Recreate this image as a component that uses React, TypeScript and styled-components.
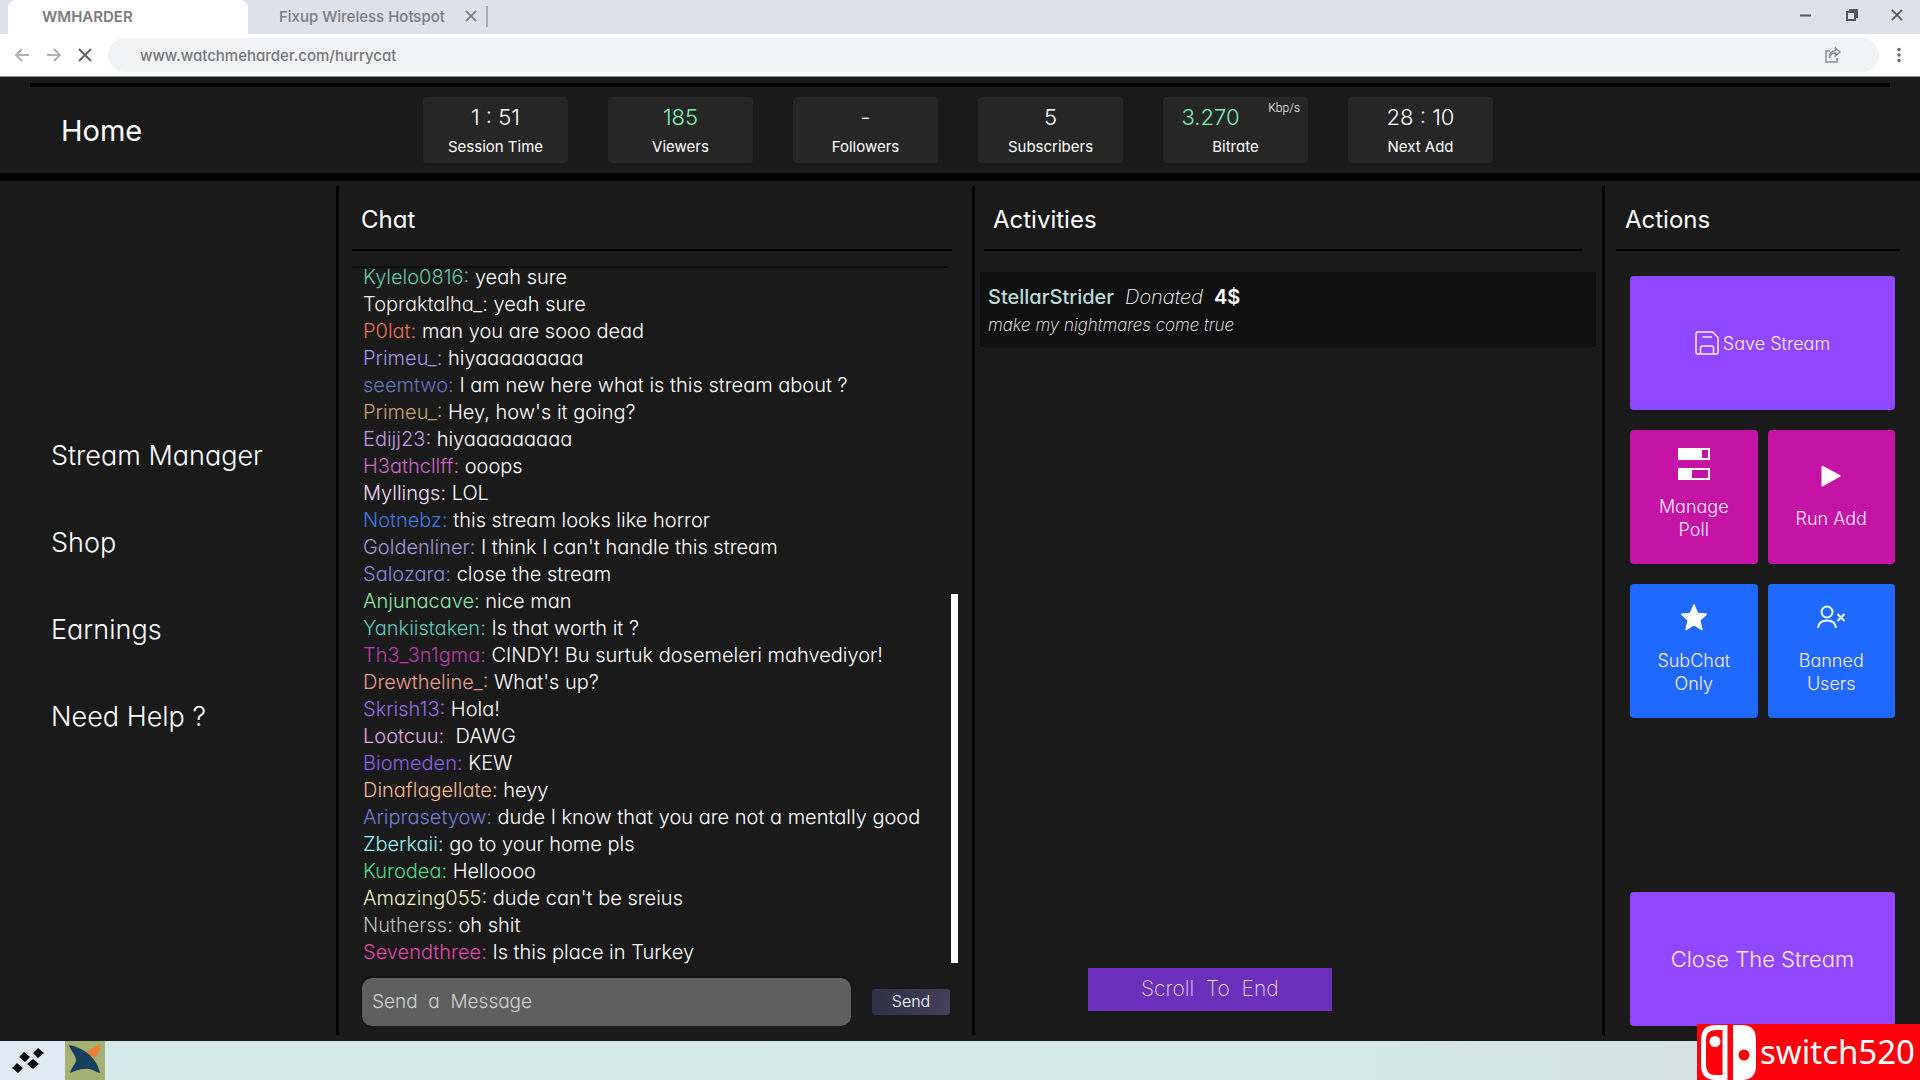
import React from "react";
import styled, { createGlobalStyle } from "styled-components";

const GlobalStyle = createGlobalStyle`
  *, *::before, *::after { box-sizing: border-box; }
  body {
    margin: 0;
    background: #1a1a1a;
    color: #fff;
    font-family: Inter, "Liberation Sans", sans-serif;
    font-weight: 300;
    font-feature-settings: "cv11";
  }
  button, input { font: inherit; font-feature-settings: inherit; color: inherit; border: 0; margin: 0; padding: 0; background: none; }
  a { color: inherit; text-decoration: none; }
  h1, h2, p, ul, dl, dt, dd { margin: 0; padding: 0; font-weight: inherit; }
  ul { list-style: none; }
`;

const Page = styled.div`
  display: flex;
  flex-direction: column;
  height: 100vh;
  min-height: 900px;
  position: relative;
`;

/* Browser chrome */

const TabBar = styled.div`
  display: flex;
  align-items: stretch;
  height: 34px;
  padding-left: 8px;
  background: #dde1ea;
  color: #7c7c80;
  font-size: 15px;
  font-weight: 600;
`;

const ActiveTab = styled.button`
  width: 240px;
  padding: 0 0 2px 34px;
  text-align: left;
  background: #fff;
  border-radius: 8px 8px 0 0;
`;

const Tab = styled.div`
  display: flex;
  align-items: center;
  gap: 18px;
  width: 240px;
  padding: 0 9px 2px 31px;
  border-right: 2px solid #a9acb3;
  border-image: linear-gradient(transparent 20%, #a9acb3 20% 78%, transparent 78%) 1;
`;

const TabName = styled.button`
  flex: 1;
  text-align: left;
  white-space: nowrap;
  font-weight: 500;
`;

const IconButton = styled.button`
  display: flex;
  align-items: center;
  justify-content: center;
`;

const WindowControls = styled.div`
  display: flex;
  align-items: center;
  gap: 31px;
  margin-left: auto;
  padding: 0 17px 5px 0;
  color: #55575c;
`;

const Toolbar = styled.div`
  display: flex;
  align-items: center;
  gap: 16px;
  height: 43px;
  padding: 0 17px 0 14px;
  background: #fff;
  border-bottom: 1px solid #8b9393;
  color: #606266;
`;

const AddressBar = styled.div`
  display: flex;
  align-items: center;
  flex: 1;
  height: 34px;
  padding: 0 38px 0 32px;
  border-radius: 17px;
  background: #f1f3f5;
`;

const Address = styled.input`
  flex: 1;
  min-width: 0;
  font-size: 15px;
  font-weight: 500;
  color: #77777a;
`;

/* Dashboard header */

const Header = styled.header`
  display: flex;
  flex-direction: column;
  height: 104px;
  padding-top: 6px;
  border-bottom: 8px solid #000;
`;

const HeaderRule = styled.div`
  height: 4px;
  margin: 0 30px;
  background: #000;
`;

const HeaderRow = styled.div`
  display: flex;
  align-items: flex-start;
  padding-top: 10px;
`;

const HomeLink = styled.a`
  width: 362px;
  margin-left: 61px;
  padding-top: 16px;
  font-size: 29px;
  line-height: 36px;
  font-weight: 400;
`;

const Stats = styled.dl`
  display: flex;
  gap: 40px;
`;

const Stat = styled.div`
  position: relative;
  display: flex;
  flex-direction: column-reverse;
  justify-content: center;
  gap: 6px;
  width: 145px;
  height: 66px;
  border-radius: 4px;
  background: #262626;
  text-align: center;
`;

const StatLabel = styled.dt`
  font-size: 15px;
  line-height: 20px;
  font-weight: 400;
`;

const StatValue = styled.dd<{ $live?: boolean; $shift?: boolean }>`
  font-size: 22px;
  line-height: 28px;
  color: ${p => (p.$live ? "#7ff0b4" : "#fff")};
  padding-right: ${p => (p.$shift ? "50px" : "0")};
`;

const Unit = styled.span`
  position: absolute;
  top: 3px;
  right: 8px;
  font-family: Roboto, sans-serif;
  font-size: 12px;
  line-height: 16px;
  font-weight: 300;
  color: #fff;
`;

/* Main columns */

const Main = styled.main`
  display: grid;
  grid-template-columns: 339px 636fr 630fr 315px;
  flex: 1;
  min-height: 0;
  padding: 5px 0 6px;
`;

const Column = styled.section`
  display: flex;
  flex-direction: column;
  min-width: 0;
  min-height: 0;
  border-right: 3px solid #000;

  &:last-child { border-right: 0; }
`;

const Sidebar = styled.nav`
  display: flex;
  flex-direction: column;
  gap: 57px;
  padding: 255px 0 0 51px;
  border-right: 3px solid #000;
  font-size: 27px;
  line-height: 30px;
`;

const ColumnTitle = styled.h2<{ $inset: number }>`
  height: 65px;
  margin: 0 20px 0 ${p => p.$inset}px;
  padding: 18px 0 0 9px;
  border-bottom: 2px solid #000;
  font-size: 24px;
  line-height: 32px;
  font-weight: 400;
`;

const ChatBody = styled.div`
  display: flex;
  gap: 3px;
  flex: 1;
  min-height: 0;
  margin: 15px 14px 12px 13px;
`;

const Messages = styled.ul`
  display: flex;
  flex-direction: column;
  justify-content: flex-end;
  flex: 1;
  overflow: hidden;
  padding-left: 11px;
  border-top: 2px solid #0e0e0e;
  font-size: 20px;
  line-height: 27px;
`;

const Message = styled.li`
  flex: none;
  white-space: pre-wrap;
`;

const Author = styled.span<{ $color: string }>`
  color: ${p => p.$color};
`;

const ScrollTrack = styled.div`
  display: flex;
  flex-direction: column;
  justify-content: flex-end;
  width: 7px;
  padding-bottom: 3px;
`;

const ScrollThumb = styled.div`
  height: 53%;
  background: #fff;
`;

const Composer = styled.form`
  display: flex;
  align-items: center;
  gap: 21px;
  margin: 0 22px 9px 23px;
`;

const MessageInput = styled.input`
  flex: 1;
  min-width: 0;
  height: 48px;
  padding: 0 10px 1px;
  border-radius: 10px;
  background: #5f5f5f;
  box-shadow: 0 -1px 0 1px #121212;
  font-size: 19px;

  &::placeholder { color: #d0d0d0; opacity: 1; }
`;

const SendButton = styled.button`
  width: 78px;
  height: 26px;
  padding-bottom: 2px;
  border-radius: 3px;
  background: linear-gradient(100deg, #2c3348, #3a3852 60%, #45405a);
  font-size: 16px;
`;

const Activity = styled.article`
  margin: 21px 6px 0 5px;
  padding: 11px 8px 8px;
  background: #101010;
  font-size: 20px;
  line-height: 28px;
`;

const ActivityLine = styled.p`
  display: flex;
  gap: 11px;
`;

const Donor = styled.strong`
  font-weight: 500;
  color: #b9dcd9;
`;

const Verb = styled.em`
  font-weight: 200;
`;

const Amount = styled.strong`
  font-weight: 600;
`;

const ActivityNote = styled.p`
  font-size: 17px;
  font-style: italic;
  font-weight: 200;
`;

const ScrollToEnd = styled.button`
  width: 244px;
  height: 43px;
  margin: auto 0 24px 18%;
  padding-bottom: 2px;
  background: #6a30bc;
  color: #e6d8f2;
  font-size: 21px;
  font-weight: 200;
  white-space: pre;
`;

const ActionGrid = styled.div`
  display: grid;
  grid-template-columns: 1fr 1fr;
  gap: 20px 10px;
  margin: 25px 25px 0;
`;

const Tile = styled.button<{ $bg: string }>`
  display: flex;
  flex-direction: column;
  align-items: center;
  justify-content: center;
  gap: 15px;
  height: 134px;
  padding: 0 16px 5px;
  border-radius: 4px;
  background: ${p => p.$bg};
  color: #fdeaff;
  font-size: 18px;
  line-height: 23px;
`;

const WideTile = styled(Tile)`
  flex-direction: row;
  gap: 4px;
  grid-column: 1 / -1;
  padding: 0;
`;

const CloseTile = styled(WideTile)`
  margin: auto 25px 9px;
  font-size: 22px;
`;

/* Taskbar */

const Taskbar = styled.footer`
  display: flex;
  height: 39px;
  background: linear-gradient(90deg, #dfeaf3 0, #dfeaf3 64px, #d3e9ea 110px, #d5e9ea 70%, #d3dde1);
`;

const StartButton = styled(IconButton)`
  width: 65px;
  padding: 0 10px 0 0;
`;

const AppButton = styled(IconButton)`
  width: 40px;
  padding-bottom: 4px;
  background: #a5b074;
`;

const Watermark = styled.div`
  position: absolute;
  right: 0;
  bottom: 0;
  display: flex;
  align-items: center;
  gap: 4px;
  height: 56px;
  padding: 0 5px 0 4px;
  background: #ff000c;
  font-family: "Noto Sans", sans-serif;
  font-size: 33px;
  line-height: 56px;
  font-weight: 400;
`;

const messages: [string, string, string][] = [
  ["Kylelo0816", "#62c9a4", "yeah sure"],
  ["Topraktalha_", "#f1eee6", "yeah sure"],
  ["P0lat", "#e8705a", "man you are sooo dead"],
  ["Primeu_", "#a294e6", "hiyaaaaaaaaa"],
  ["seemtwo", "#5f74bb", "I am new here what is this stream about ?"],
  ["Primeu_", "#c8a06c", "Hey, how's it going?"],
  ["Edijj23", "#be9ae2", "hiyaaaaaaaaa"],
  ["H3athcllff", "#c968c2", "ooops"],
  ["Myllings", "#f3dcfa", "LOL"],
  ["Notnebz", "#3a7be2", "this stream looks like horror"],
  ["Goldenliner", "#a298d4", "I think I can't handle this stream"],
  ["Salozara", "#868dd8", "close the stream"],
  ["Anjunacave", "#8ce4a8", "nice man"],
  ["Yankiistaken", "#5ec8be", "Is that worth it ?"],
  ["Th3_3n1gma", "#b83cab", "CINDY! Bu surtuk dosemeleri mahvediyor!"],
  ["Drewtheline_", "#e89c90", "What's up?"],
  ["Skrish13", "#9370e8", "Hola!"],
  ["Lootcuu", "#e0aee4", " DAWG"],
  ["Biomeden", "#8860e4", "KEW"],
  ["Dinaflagellate", "#f2b891", "heyy"],
  ["Ariprasetyow", "#6f7ed6", "dude I know that you are not a mentally good"],
  ["Zberkaii", "#96eef7", "go to your home pls"],
  ["Kurodea", "#48db7e", "Helloooo"],
  ["Amazing055", "#ecedc0", "dude can't be sreius"],
  ["Nutherss", "#bcbcbc", "oh shit"],
  ["Sevendthree", "#e046aa", "Is this place in Turkey"],
];

const stats: { label: string; value: string; live?: boolean; unit?: string }[] = [
  { label: "Session Time", value: "1 : 51" },
  { label: "Viewers", value: "185", live: true },
  { label: "Followers", value: "-" },
  { label: "Subscribers", value: "5" },
  { label: "Bitrate", value: "3.270", live: true, unit: "Kbp/s" },
  { label: "Next Add", value: "28 : 10" },
];

const Cross = ({ size = 14, width = 2 }: { size?: number; width?: number }) => (
  <svg width={size} height={size} viewBox="0 0 14 14" fill="none" stroke="currentColor" strokeWidth={width}>
    <path d="M1 1l12 12M13 1L1 13" />
  </svg>
);

const Arrow = ({ flip }: { flip?: boolean }) => (
  <svg width="16" height="16" viewBox="0 0 16 16" fill="none" stroke="#b0b2b5" strokeWidth="2">
    <path d={flip ? "M1 8h13M8 2l6 6-6 6" : "M15 8H2M8 2L2 8l6 6"} />
  </svg>
);

const SaveIcon = () => (
  <svg width="24" height="24" viewBox="0 0 24 24" fill="none" stroke="currentColor" strokeWidth="1.5" strokeLinejoin="round">
    <path d="M1 2.500Q1 1 2.500 1H17.500L23 6.500V21.500Q23 23 21.500 23H2.500Q1 23 1 21.500Z" />
    <path d="M5.500 23V17Q5.500 15 7.500 15H16.500Q18.500 15 18.500 17V23M7.500 6H17" />
  </svg>
);

const PollIcon = () => (
  <svg width="32" height="32" viewBox="0 0 32 32" fill="none" stroke="#fff" strokeWidth="2">
    <path d="M1 1h30v10H1zM1 21h30v10H1z" />
    <path d="M1 1h22v10H1zM1 21h12v10H1z" fill="#fff" />
  </svg>
);

const PlayIcon = () => (
  <svg width="20" height="32" viewBox="0 0 20 32" fill="#fff" stroke="#fff" strokeWidth="2" strokeLinejoin="round">
    <path d="M1.500 7L18.500 16 1.500 25.500z" />
  </svg>
);

const StarIcon = () => (
  <svg width="28" height="32" viewBox="0 0 28 32" fill="#fff" stroke="#fff" strokeWidth="1" strokeLinejoin="round">
    <path d="M14 2.500l3.800 8.700 9.200.900-7 6.300 2.200 9.600L14 23 5.800 28 8 18.400l-7-6.300 9.200-.900z" />
  </svg>
);

const BannedIcon = () => (
  <svg width="28" height="32" viewBox="0 0 28 32" fill="none" stroke="#eafaff" strokeWidth="2">
    <circle cx="10" cy="10" r="5.500" />
    <path d="M1 26c.500-5 4-7.500 9-7.500s8.500 2.500 9 7.500M20.500 12l7 7M27.500 12l-7 7" />
  </svg>
);

const StartIcon = () => (
  <svg width="32" height="26" viewBox="0 0 32 26" fill="#0a0d10">
    <path d="M26 0l6 5-6 5-5-5zM12 4l6 5-5 5-6-5zM21 11l6 5-6 5-6-5zM5 15l6 5-5 5-6-5z" />
  </svg>
);

const BirdIcon = () => (
  <svg width="32" height="30" viewBox="0 0 32 30">
    <path d="M17 8L31 0l-.500 6L26 14z" fill="#ef7f2d" />
    <path d="M0 1c13 2 28 12 31 28-5-1-9-5-15-4-6 0-10 2-15 4 2-7 6-9 6-13C7 11 1 6 0 1z" fill="#163f5c" />
  </svg>
);

const SwitchLogo = () => (
  <svg width="55" height="55" viewBox="0 0 55 55">
    <path d="M24 2.500H14.500Q2.500 2.500 2.500 15v25q0 12.500 12 12.500H24z" fill="none" stroke="#fff" strokeWidth="5" />
    <circle cx="14" cy="16.500" r="5.500" fill="#fff" />
    <path d="M32 0h9q14 0 14 15v25q0 15-14 15h-9z" fill="#fff" />
    <circle cx="43" cy="30" r="5.500" fill="#ff000c" />
  </svg>
);

export default function App() {
  return (
    <Page>
      <GlobalStyle />
      <TabBar>
        <ActiveTab>WMHARDER</ActiveTab>
        <Tab>
          <TabName>Fixup Wireless Hotspot</TabName>
          <IconButton aria-label="Close tab"><Cross size={12} /></IconButton>
        </Tab>
        <WindowControls>
          <IconButton aria-label="Minimize">
            <svg width="16" height="16" viewBox="0 0 16 16" stroke="currentColor" strokeWidth="2"><path d="M3 8.500h11" /></svg>
          </IconButton>
          <IconButton aria-label="Restore">
            <svg width="16" height="16" viewBox="0 0 16 16" fill="none" stroke="currentColor" strokeWidth="2">
              <path d="M3 5h8v8H3zM5 3h8v8" />
            </svg>
          </IconButton>
          <IconButton aria-label="Close window"><Cross size={12} /></IconButton>
        </WindowControls>
      </TabBar>
      <Toolbar>
        <IconButton aria-label="Back"><Arrow /></IconButton>
        <IconButton aria-label="Forward"><Arrow flip /></IconButton>
        <IconButton aria-label="Stop"><Cross /></IconButton>
        <AddressBar>
          <Address aria-label="Address" defaultValue="www.watchmeharder.com/hurrycat" />
          <IconButton aria-label="Share">
            <svg width="16" height="16" viewBox="0 0 16 16" fill="none" stroke="#8c8e92" strokeWidth="1.500">
              <path d="M5 4H1v11h11v-4M4.500 11C5 7.500 7 6 10.500 6V9L15 5l-4.500-4v2.500C6 4 4 7 4.500 11z" />
            </svg>
          </IconButton>
        </AddressBar>
        <IconButton aria-label="Menu">
          <svg width="8" height="16" viewBox="0 0 8 16" fill="#66686c">
            <circle cx="4" cy="2.500" r="1.700" /><circle cx="4" cy="8" r="1.700" /><circle cx="4" cy="13.500" r="1.700" />
          </svg>
        </IconButton>
      </Toolbar>

      <Header>
        <HeaderRule />
        <HeaderRow>
          <HomeLink href="#home">Home</HomeLink>
          <Stats>
            {stats.map(s => (
              <Stat key={s.label}>
                <StatLabel>{s.label}</StatLabel>
                <StatValue $live={s.live} $shift={!!s.unit}>
                  {s.value}
                  {s.unit && <Unit>{s.unit}</Unit>}
                </StatValue>
              </Stat>
            ))}
          </Stats>
        </HeaderRow>
      </Header>

      <Main>
        <Sidebar>
          <a href="#manager">Stream Manager</a>
          <a href="#shop">Shop</a>
          <a href="#earnings">Earnings</a>
          <a href="#help">Need Help ?</a>
        </Sidebar>

        <Column>
          <ColumnTitle $inset={13}>Chat</ColumnTitle>
          <ChatBody>
            <Messages>
              {messages.map(([name, color, text]) => (
                <Message key={name + text}>
                  <Author $color={color}>{name}:</Author> {text}
                </Message>
              ))}
            </Messages>
            <ScrollTrack><ScrollThumb /></ScrollTrack>
          </ChatBody>
          <Composer onSubmit={e => e.preventDefault()}>
            <MessageInput aria-label="Message" placeholder="Send  a  Message" />
            <SendButton type="submit">Send</SendButton>
          </Composer>
        </Column>

        <Column>
          <ColumnTitle $inset={9}>Activities</ColumnTitle>
          <Activity>
            <ActivityLine>
              <Donor>StellarStrider</Donor>
              <Verb>Donated</Verb>
              <Amount>4$</Amount>
            </ActivityLine>
            <ActivityNote>make my nightmares come true</ActivityNote>
          </Activity>
          <ScrollToEnd>Scroll  To  End</ScrollToEnd>
        </Column>

        <Column>
          <ColumnTitle $inset={11}>Actions</ColumnTitle>
          <ActionGrid>
            <WideTile $bg="#9146ff"><SaveIcon />Save Stream</WideTile>
            <Tile $bg="#c513a6"><PollIcon />Manage Poll</Tile>
            <Tile $bg="#c513a6"><PlayIcon />Run Add</Tile>
            <Tile $bg="#1f69ff"><StarIcon />SubChat Only</Tile>
            <Tile $bg="#1f69ff"><BannedIcon />Banned Users</Tile>
          </ActionGrid>
          <CloseTile $bg="#9146ff">Close The Stream</CloseTile>
        </Column>
      </Main>

      <Taskbar>
        <StartButton aria-label="Start"><StartIcon /></StartButton>
        <AppButton aria-label="Browser"><BirdIcon /></AppButton>
      </Taskbar>
      <Watermark><SwitchLogo />switch520</Watermark>
    </Page>
  );
}
